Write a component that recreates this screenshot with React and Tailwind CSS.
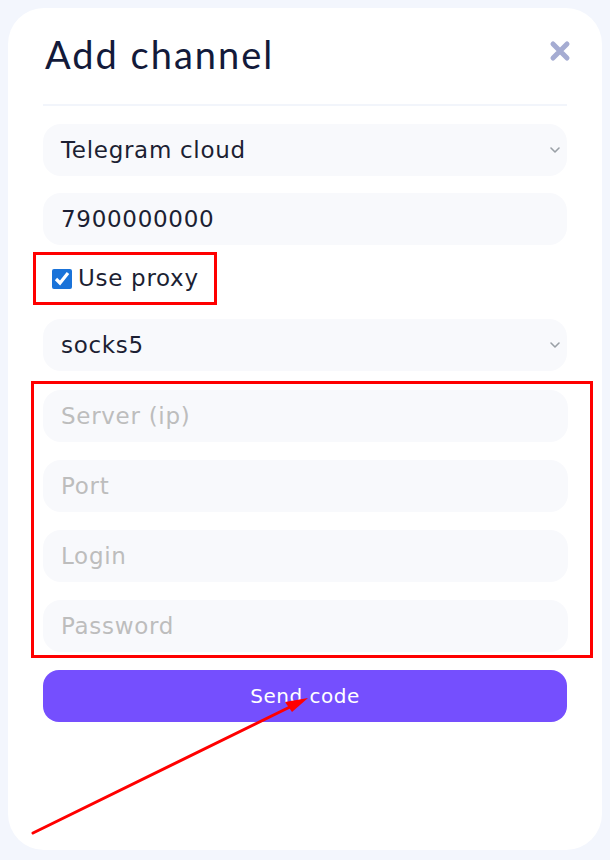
import React from "react";

function Chevron() {
  return (
    <svg width="12" height="8" viewBox="0 0 12 8" className="shrink-0">
      <path d="M2 2 L6 6 L10 2" fill="none" stroke="#9aa0a6" strokeWidth="1.6" strokeLinecap="round" strokeLinejoin="round" />
    </svg>
  );
}

function Field({ children, select, placeholder }) {
  return (
    <div className="h-[52px] rounded-[18px] bg-[#f8f9fc] flex items-center justify-between pl-[18px] pr-[6px]">
      <span className={placeholder ? "text-[#bdbdbd]" : "text-[#1c1f33]"}>{children}</span>
      {select && <Chevron />}
    </div>
  );
}

export default function App() {
  return (
    <div className="min-h-[860px] w-[610px] bg-[#f3f6fd] p-[8px] relative" style={{ fontFamily: '"DejaVu Sans", "Noto Sans", sans-serif' }}>
      <div className="bg-white rounded-[36px] h-[842px] w-[594px] px-[35px] pt-[18px]">
        <div className="flex items-center justify-between h-[56px]">
          <h1 className="text-[38px] leading-none text-[#131a3a] font-normal pl-[2px] tracking-[2px]" style={{ fontFamily: '"Lato", sans-serif' }}>Add channel</h1>
          <svg width="22" height="22" viewBox="0 0 22 22" className="mr-[-4px] mt-[-6px]">
            <path d="M4 4 L18 18 M18 4 L4 18" stroke="#a5acd2" strokeWidth="5" strokeLinecap="round" />
          </svg>
        </div>
        <div className="h-[2px] bg-[#f2f5fb] mt-[22px] mb-[18px]" />
        <div className="text-[23px] tracking-[0.7px] flex flex-col">
          <Field select>Telegram cloud</Field>
          <div className="mt-[17px]"><Field>7900000000</Field></div>
          <div className="mt-[7px] ml-[-10px] w-[184px] h-[53px] border-[3px] border-[#ff0000] flex items-center pl-[16px] gap-[6px]">
            <input type="checkbox" defaultChecked className="w-[20px] h-[20px] accent-[#1a73d9]" />
            <span className="text-[#1c1f33]">Use proxy</span>
          </div>
          <div className="mt-[14px]"><Field select>socks5</Field></div>
          <div className="mt-[10px] ml-[-12px] w-[562px] border-[3px] border-[#ff0000] pl-[9px] pr-[22px] pt-[6px] pb-[3px] flex flex-col gap-[18px]">
            <Field placeholder>Server (ip)</Field>
            <Field placeholder>Port</Field>
            <Field placeholder>Login</Field>
            <Field placeholder>Password</Field>
          </div>
          <button className="mt-[12px] h-[52px] rounded-[16px] bg-[#754ffe] text-white text-[20px] tracking-[0.5px]">Send code</button>
        </div>
      </div>
      <svg className="absolute left-0 top-0 pointer-events-none" width="610" height="860">
        <line x1="33" y1="833" x2="296" y2="704" stroke="#ff0000" strokeWidth="3" strokeLinecap="round" />
        <polygon points="308,698 285,702 292,712" fill="#ff0000" />
      </svg>
    </div>
  );
}
